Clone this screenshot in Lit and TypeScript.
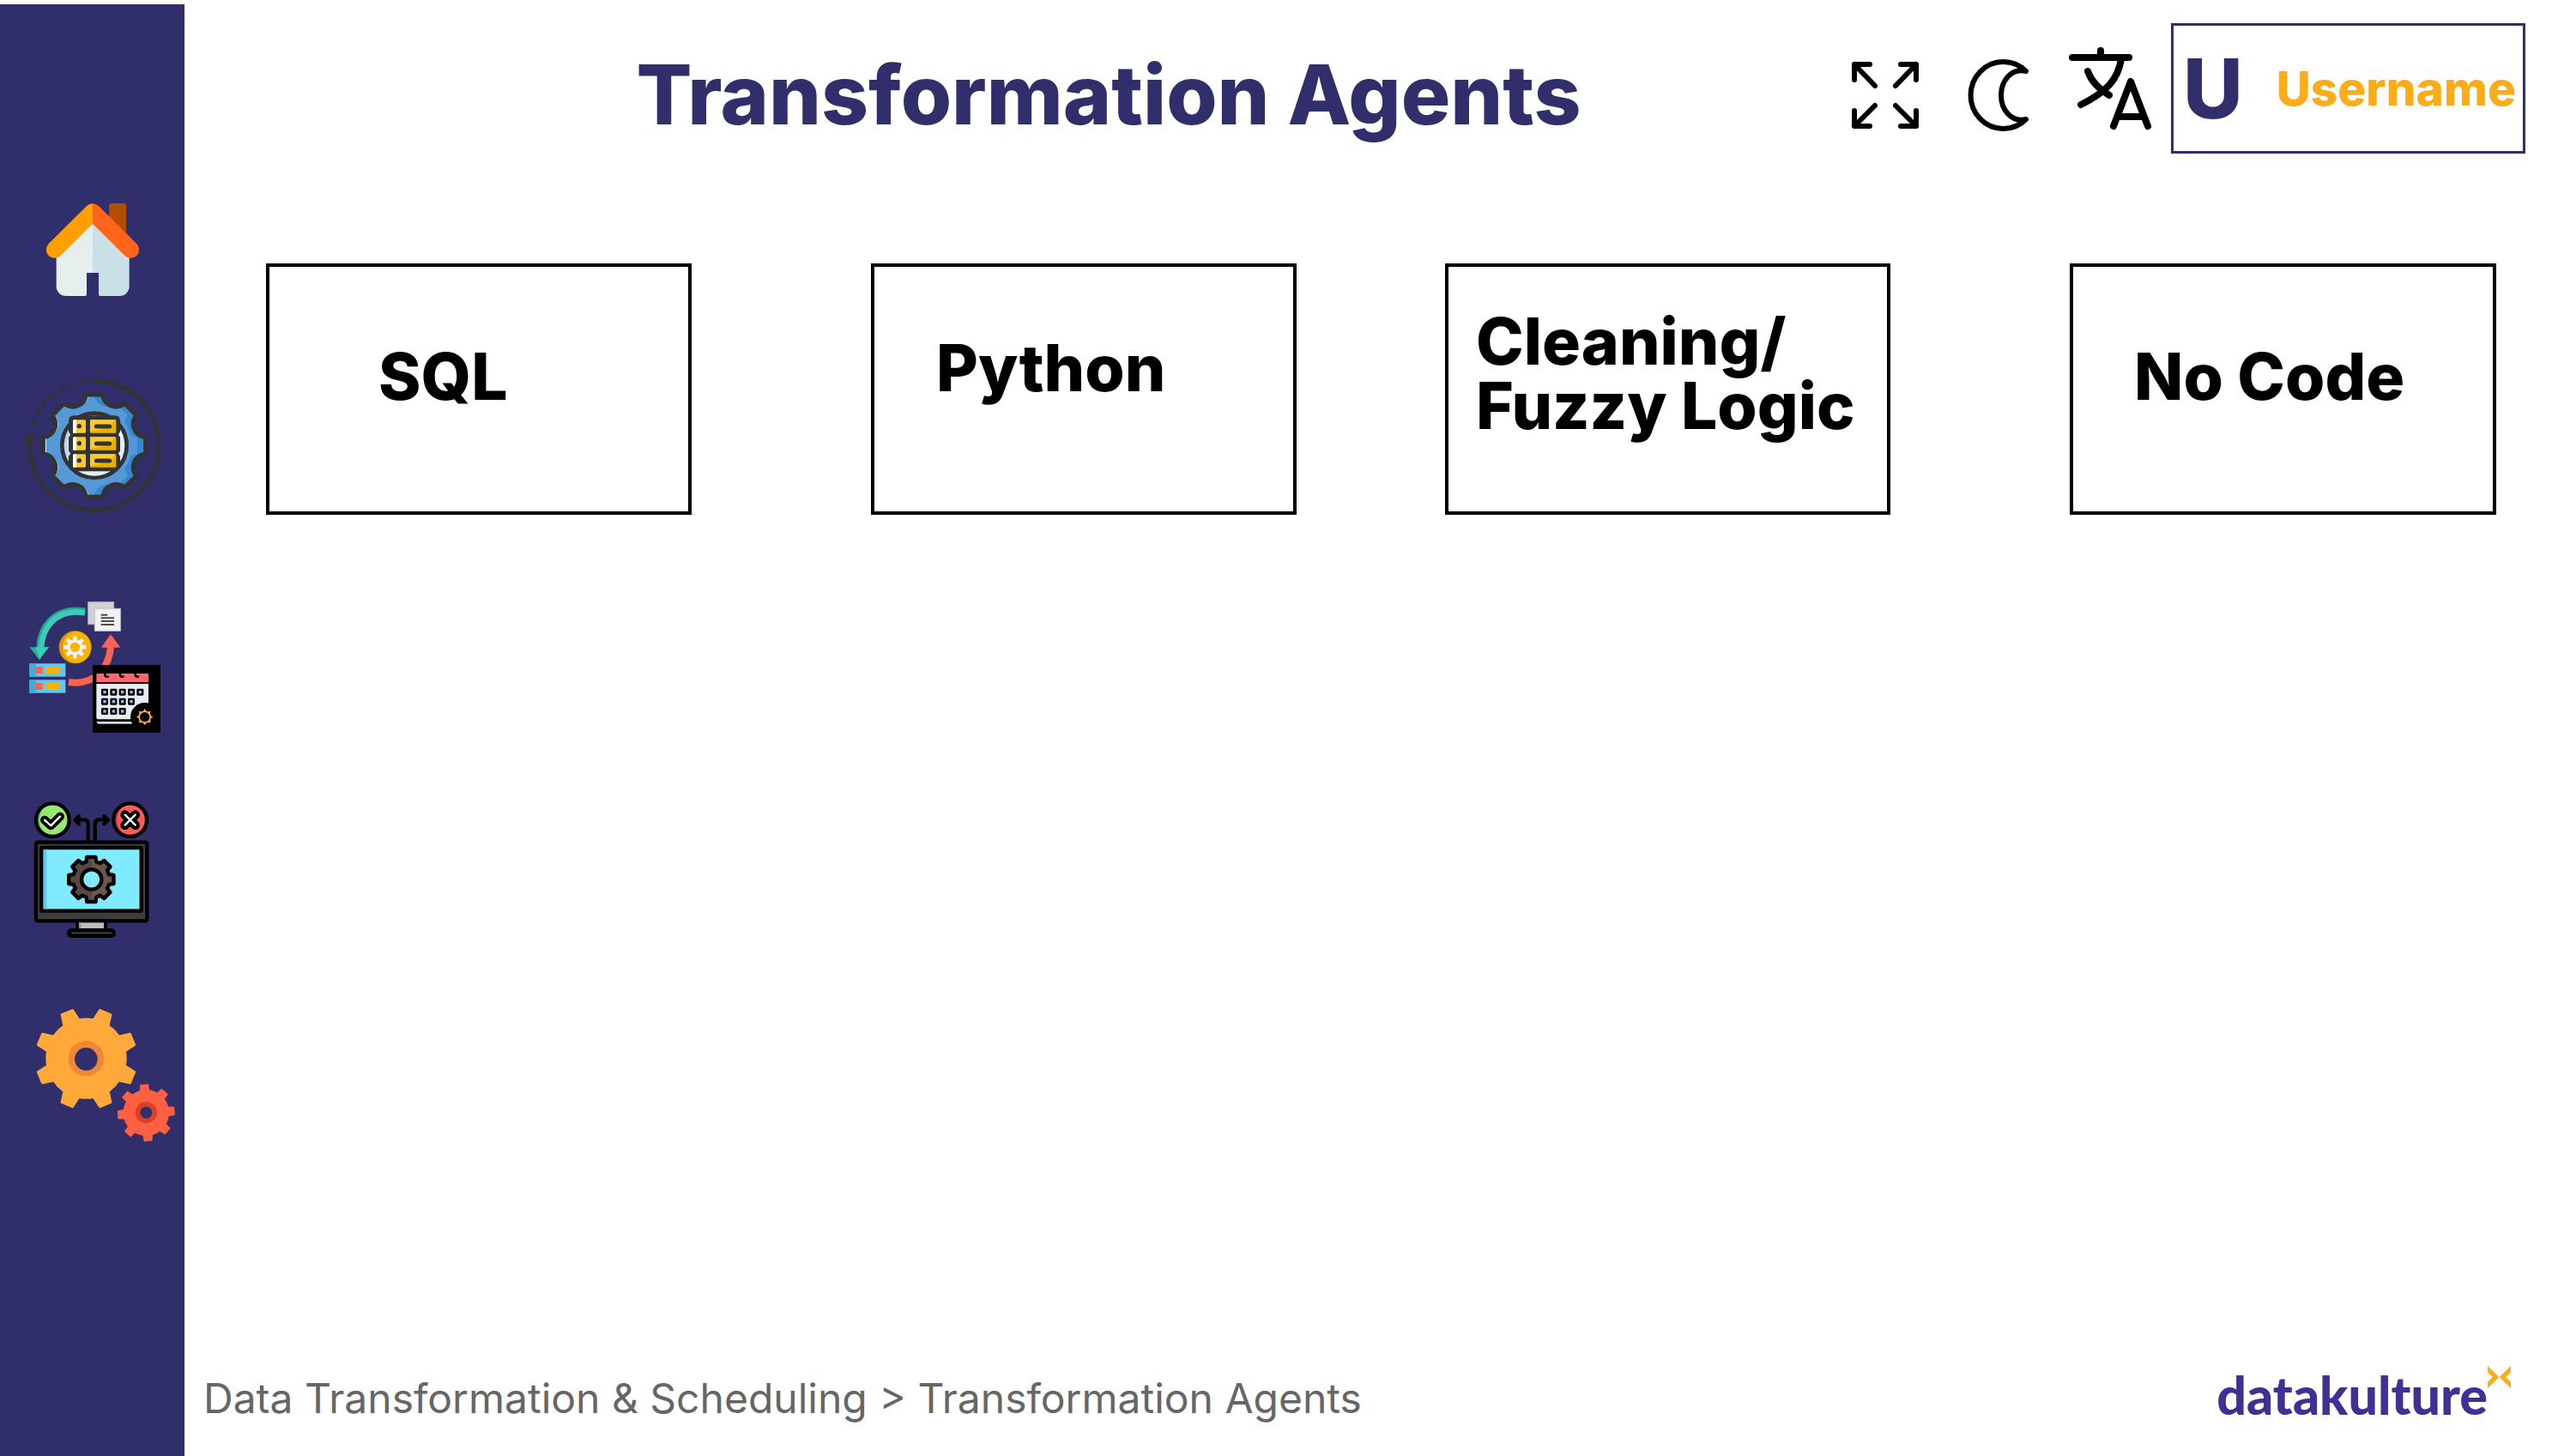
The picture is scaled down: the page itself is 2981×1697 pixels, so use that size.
import { LitElement, html, svg, css } from "lit";
import { customElement } from "lit/decorators.js";

const polar = (cx: number, cy: number, r: number, deg: number): string => {
  const a = ((deg - 90) * Math.PI) / 180;
  return `${(cx + r * Math.cos(a)).toFixed(1)} ${(cy + r * Math.sin(a)).toFixed(1)}`;
};

/** Gear with eight straight teeth; the angles are half widths in degrees. */
const cog = (cx: number, cy: number, body: number, tip: number, base: number, top: number, turn = 0): string => {
  let d = "";
  for (let i = 0; i < 8; i++) {
    const a = turn + i * 45;
    d += `${i ? "L" : "M"}${polar(cx, cy, body, a - base)}L${polar(cx, cy, tip, a - top)}`;
    d += `L${polar(cx, cy, tip, a + top)}L${polar(cx, cy, body, a + base)}`;
    d += `A${body} ${body} 0 0 1 ${polar(cx, cy, body, a + 45 - base)}`;
  }
  return d + "Z";
};

/** Gear whose teeth run into each other in soft hollows. */
const softCog = (cx: number, cy: number): string => {
  let d = `M${polar(cx, cy, 180, -9)}`;
  for (let i = 0; i < 8; i++) {
    const a = i * 45;
    d += `L${polar(cx, cy, 181, a + 9)}C${polar(cx, cy, 144, a + 14)} ${polar(cx, cy, 144, a + 31)} ${polar(cx, cy, 181, a + 36)}`;
  }
  return d + "Z";
};

const homeIcon = svg`
  <rect x="381" y="111" width="60" height="120" rx="8" fill="#b34d00"/>
  <path d="M324 170 197 290V401a34 34 0 0 0 34 34H297q6 0 6-6V354H324Z" fill="#e7efee"/>
  <path d="M324 170 452 290V401a34 34 0 0 1-34 34H351q-6 0-6-6V354H324Z" fill="#c7e1e6"/>
  <clipPath id="roof-l"><rect x="100" y="80" width="224" height="260"/></clipPath>
  <clipPath id="roof-r"><rect x="324" y="80" width="224" height="260"/></clipPath>
  <g fill="none" stroke-width="59" stroke-linecap="round" stroke-linejoin="round">
    <path d="M191 273 324 141 457 273" stroke="#ffa000" clip-path="url(#roof-l)"/>
    <path d="M191 273 324 141 457 273" stroke="#ff641a" clip-path="url(#roof-r)"/>
  </g>`;

const transformIcon = svg`
  <clipPath id="cog"><path d=${softCog(330, 298)}/></clipPath>
  <clipPath id="cog-lit"><path d=${softCog(340, 298)}/></clipPath>
  <g clip-path="url(#cog)">
    <rect x="140" y="100" width="380" height="400" fill="#fff"/>
    <g clip-path="url(#cog-lit)">
      <rect x="140" y="100" width="380" height="400" fill="#3687cc"/>
      <path d=${softCog(300, 298)} fill="#559ad6"/>
      <circle cx="322" cy="298" r="140" fill="#559ad6"/>
    </g>
  </g>
  <path d=${softCog(330, 298)} fill="none" stroke="#333" stroke-width="15" stroke-linejoin="round"/>
  <circle cx="330" cy="298" r="113" fill="#e1edf7"/>
  <path d="M252 216A113 113 0 0 1 408 216L396 208A130 130 0 0 0 264 208Z" fill="#b9d5ef"/>
  <path d="M236 236Q212 298 236 360L246 352Q228 298 246 244Z" fill="#b9d5ef"/>
  <path d="M276 192Q330 178 384 192Z" fill="#b9d5ef"/>
  <circle cx="330" cy="298" r="113" fill="none" stroke="#333" stroke-width="14"/>
  <path d="M240 212q0-19 19-19H400q20 0 20 19V248l-6 12 6 10V316l-6 10 6 10V360L398 388H262L240 360V336l6-10-6-10V270l6-10-6-12Z" fill="#333"/>
  ${[208, 268, 328].map(
    (y) => svg`
    <rect x="255" y=${y} width="45" height="46" rx="4" fill="#ffc928"/>
    <path d=${`M259 ${y}H266V${y + 46}H255V${y + 4}Z`} fill="#fff"/>
    <rect x="315" y=${y} width="91" height="46" rx="3" fill="#e9b200"/>
    <path d=${`M315 ${y}H403Q385 ${y + 34} 315 ${y + 40}Z`} fill="#ffc928"/>
    <circle cx="277" cy=${y + 22} r="8" fill="#333"/>
    <path d=${`M337 ${y + 23}H383`} stroke="#333" stroke-width="15" stroke-linecap="round"/>`
  )}
  <g fill="none" stroke="#333" stroke-width="15" stroke-linecap="round" stroke-linejoin="round">
    <path d="M330 72A226 226 0 1 1 104 298V265"/>
    <path d="M90 276 104 262 118 276" />
    <path d="M292 74 298 73M252 86 258 83M215 104 221 100M182 127 187 122M153 156 157 151M134 184 138 179M117 220 120 214"/>
  </g>`;

const scheduleIcon = svg`
  <path d="M138 226C140 150 190 94 264 94Q282 94 297 97" fill="none" stroke="#1fa793" stroke-width="22"/>
  <path d="M144 226C148 152 196 100 264 100Q282 100 297 103" fill="none" stroke="#3fc9b6" stroke-width="20"/>
  <path d="M104 223H171L138 268Z" fill="#26b19d"/>
  <path d="M124 223H171L138 262Z" fill="#3fc9b6"/>
  <path d="M240 345C310 356 378 318 387 222" fill="none" stroke="#fd6450" stroke-width="24"/>
  <path d="M354 224 387 178 421 224Z" fill="#fd6450"/>
  <rect x="308" y="65" width="90" height="78" fill="#d1d1d1" stroke="#a9a8bd" stroke-width="3"/>
  <rect x="331" y="88" width="90" height="78" fill="#f1f1f1" stroke="#c5c4d4" stroke-width="3"/>
  <path d="M353 110H376M353 121H399M353 132H399M353 144H399" stroke="#4d4d4d" stroke-width="6"/>
  <circle cx="263" cy="223" r="57" fill="#dd9800"/>
  <ellipse cx="268" cy="223" rx="50" ry="55" fill="#fbb302"/>
  <path d=${cog(262, 223, 27, 40, 16, 9)} fill="#f1f1f1"/>
  <circle cx="262" cy="223" r="17" fill="#fbb302"/>
  ${[280, 337].map(
    (y) => svg`
    <rect x="103" y=${y} width="126" height="46" fill="#65c7f1"/>
    <rect x="103" y=${y} width="23" height="46" fill="#4aa9d4"/>
    <rect x="126" y=${y + 11} width="23" height="24" fill="#fd6450"/>
    <rect x="160" y=${y + 11} width="47" height="24" fill="#fbb302"/>`
  )}
  <rect x="324" y="285" width="237" height="237" fill="#000"/>
  <path d="M337 345V319q0-4 4-4H515q4 0 4 4V345Z" fill="#ff6670"/>
  <path d="M367 312V322q2 5 10 4M420 312V322q2 5 10 4M473 312V322q2 5 10 4" fill="none" stroke="#000" stroke-width="8" stroke-linecap="round"/>
  <path d="M337 351H519V475H343q-6 0-6-6Z" fill="#e9edf1"/>
  <path d="M337 483H462V491H345q-6 0-8-8Z" fill="#d2d7dc"/>
  <circle cx="506" cy="467" r="50" fill="#000"/>
  ${[[380, 5], [413, 4], [447, 3]].map(([y, n]) =>
    Array.from({ length: n }, (_, i) => svg`
      <rect x=${354 + i * 31} y=${y - 12} width="24" height="24" rx="4" fill="#000"/>
      <rect x=${361 + i * 31} y=${y - 5} width="10" height="10" fill="#82c2ff"/>`)
  )}
  <path d=${cog(506, 467, 22, 28, 11, 2)} fill="#ffb62d"/>
  <circle cx="506" cy="467" r="17" fill="#000"/>`;

const monitorIcon = svg`
  <g fill="none" stroke="#000" stroke-width="13" stroke-linecap="round" stroke-linejoin="round">
    <path d="M308 214V150q0-14-14-14H262M276 124 262 137 276 151M332 214V150q0-14 14-14H378M364 124 378 137 364 151"/>
  </g>
  <circle cx="184" cy="137" r="58" fill="#97e870"/>
  <path d="M152 88A58 58 0 0 0 152 186Q124 137 152 88Z" fill="#3fbf74"/>
  <circle cx="184" cy="137" r="58" fill="none" stroke="#000" stroke-width="13"/>
  <circle cx="455" cy="137" r="58" fill="#ff5a5a"/>
  <path d="M424 88A58 58 0 0 0 424 186Q398 137 424 88Z" fill="#d83d43"/>
  <circle cx="455" cy="137" r="58" fill="none" stroke="#000" stroke-width="13"/>
  <g fill="none" stroke-linecap="round" stroke-linejoin="round">
    <path d="M156 137 178 157 210 125" stroke="#000" stroke-width="30"/>
    <path d="M156 137 178 157 210 125" stroke="#fff" stroke-width="7"/>
    <path d="M437 119 473 155M473 119 437 155" stroke="#000" stroke-width="32"/>
    <path d="M437 119 473 155M473 119 437 155" stroke="#fff" stroke-width="7"/>
  </g>
  <rect x="126" y="215" width="388" height="275" rx="6" fill="#3d3d3f" stroke="#000" stroke-width="13"/>
  <rect x="145" y="234" width="349" height="221" rx="2" fill="#80eaff" stroke="#000" stroke-width="13"/>
  <rect x="152" y="241" width="11" height="207" fill="#66c3fa"/>
  <rect x="270" y="490" width="99" height="34" fill="#bdbdbd" stroke="#000" stroke-width="12"/>
  <rect x="276" y="496" width="8" height="22" fill="#9a9a9a"/>
  <rect x="234" y="516" width="171" height="33" rx="16" fill="#000"/>
  <path d="M251 532H389" stroke="#48484a" stroke-width="5" stroke-linecap="round"/>
  <clipPath id="cog-dark"><rect x="220" y="240" width="100" height="210"/></clipPath>
  <path d=${cog(319, 345, 64, 80, 16, 11)} fill="#6a5650"/>
  <path d=${cog(319, 345, 64, 80, 16, 11)} fill="#574642" clip-path="url(#cog-dark)"/>
  <path d=${cog(319, 345, 64, 80, 16, 11)} fill="none" stroke="#000" stroke-width="13" stroke-linejoin="round"/>
  <circle cx="320" cy="345" r="35" fill="#80eaff" stroke="#000" stroke-width="13"/>`;

const settingsIcon = svg`
  <path d=${cog(301.5, 251, 137, 175, 11.5, 6.6, 22.5)} fill="#ffa93a" stroke="#ffa93a" stroke-width="9" stroke-linejoin="round"/>
  <circle cx="301" cy="251" r="62" fill="#ee8736"/>
  <circle cx="301" cy="253" r="40" fill="#302f6b"/>
  <path d=${cog(511, 441, 78, 98, 11, 7.4, -4)} fill="#ff6042" stroke="#ff6042" stroke-width="5" stroke-linejoin="round"/>
  <circle cx="511" cy="440" r="38" fill="#d94026"/>
  <circle cx="511" cy="440" r="21" fill="#302f6b"/>`;

const navItems = [
  { label: "Home", box: "0 0 645 600", art: homeIcon },
  { label: "Data transformation", box: "0 60 645 600", art: transformIcon },
  { label: "Scheduling", box: "0 0 645 600", art: scheduleIcon },
  { label: "Monitoring", box: "0 30 645 600", art: monitorIcon },
  { label: "Settings", box: "0 30 645 600", art: settingsIcon },
];

const tools = [
  {
    label: "Full screen",
    art: svg`<path stroke-width="6" d="M12 42V24H30M12 24 36 49M66 24H84V42M84 24 60 49M12 78V96H30M12 96 36 72M66 96H84V78M84 96 60 72"/>`,
  },
  {
    label: "Dark mode",
    art: svg`<path stroke-width="6" d="M81 32A38 39 0 1 0 81 88C63 92 52 76 52 60S63 28 81 32Z"/>`,
  },
  {
    label: "Language",
    art: svg`<path stroke-width="8" d="M4 16H70M37 8V16M61 18C57 42 44 56 14 71M22 32C26 44 34 52 47 60M52 96 72 44 92 96M58 85H86"/>`,
  },
];

const agents = [
  { kind: "sql", name: ["SQL"] },
  { kind: "python", name: ["Python"] },
  { kind: "cleaning", name: ["Cleaning/", "Fuzzy Logic"] },
  { kind: "no-code", name: ["No Code"] },
];

@customElement("app-root")
export class AppRoot extends LitElement {
  static styles = css`
    :host {
      display: flex;
      min-height: 100vh;
      background: #fff;
      color: #000;
      font-family: Inter, "Liberation Sans", sans-serif;
    }
    * {
      box-sizing: border-box;
    }
    svg {
      display: block;
    }
    button {
      padding: 0;
      border: 0;
      background: none;
      color: inherit;
      font: inherit;
      text-align: left;
      cursor: pointer;
    }
    .sidebar {
      flex: none;
      width: 215px;
      margin-top: 5px;
      padding-top: 195px;
      background: #302f6b;
    }
    .nav {
      display: flex;
      flex-direction: column;
      gap: 40px;
    }
    .nav-link svg {
      width: 100%;
      height: 200px;
    }
    .main {
      flex: 1;
      min-width: 0;
      display: flex;
      flex-direction: column;
    }
    .header {
      display: flex;
      align-items: center;
      padding: 27px 38px 0 220px;
    }
    .title {
      flex: 1;
      margin: 0;
      padding-top: 14px;
      color: #302f6b;
      font-size: 96px;
      line-height: 116px;
      font-weight: 800;
      text-align: center;
      white-space: nowrap;
    }
    .tools {
      display: flex;
      gap: 35px;
      margin-right: 23px;
    }
    .tool svg {
      width: 96px;
      height: 104px;
      fill: none;
      stroke: #000;
      stroke-linecap: round;
      stroke-linejoin: round;
    }
    .user {
      display: flex;
      align-items: center;
      justify-content: space-between;
      width: 413px;
      height: 152px;
      padding: 0 8px 0 11px;
      border: 3px solid #302f6b;
    }
    .initial {
      color: #302f6b;
      font-size: 96px;
      font-weight: 800;
    }
    .username {
      color: #fcac18;
      font-size: 55px;
      font-weight: 800;
    }
    .agents {
      display: grid;
      grid-template-columns: 496fr 209fr 496fr 173fr 519fr 209fr 497fr;
      margin-top: 128px;
      padding: 0 72px 0 95px;
    }
    .agent {
      height: 293px;
      padding-bottom: 30px;
      border: 4px solid #000;
      font-size: 75px;
      line-height: 75px;
      font-weight: 800;
      white-space: nowrap;
    }
    .agent span {
      display: block;
    }
    .sql {
      grid-column: 1;
      padding-left: 127px;
    }
    .python {
      grid-column: 3;
      padding-left: 72px;
      padding-bottom: 50px;
    }
    .cleaning {
      grid-column: 5;
      padding-left: 32px;
      padding-bottom: 38px;
    }
    .no-code {
      grid-column: 7;
      padding-left: 71px;
    }
    .footer {
      display: flex;
      align-items: center;
      justify-content: space-between;
      margin-top: auto;
      padding: 0 55px 29px 22px;
    }
    .crumbs {
      color: #666;
      font-size: 48px;
      line-height: 76px;
      white-space: nowrap;
    }
    .crumbs a {
      color: inherit;
      text-decoration: none;
    }
    .brand {
      display: flex;
      align-items: flex-start;
      color: #3d3193;
      text-decoration: none;
    }
    .brand-name {
      padding-top: 2px;
      font-family: Lato, Inter, sans-serif;
      font-size: 61px;
      line-height: 64px;
      font-weight: 900;
    }
    .brand {
      padding-bottom: 10px;
    }
    .brand-mark {
      width: 27px;
      height: 26px;
    }
  `;

  render() {
    return html`
      <aside class="sidebar">
        <nav class="nav">
          ${navItems.map(
            (item) => html`<a class="nav-link" href="#" aria-label=${item.label}
              ><svg viewBox=${item.box} aria-hidden="true">${item.art}</svg></a
            >`
          )}
        </nav>
      </aside>
      <main class="main">
        <header class="header">
          <h1 class="title">Transformation Agents</h1>
          <div class="tools">
            ${tools.map(
              (tool) => html`<button class="tool" type="button" aria-label=${tool.label}>
                <svg viewBox="0 0 96 104" aria-hidden="true">${tool.art}</svg>
              </button>`
            )}
          </div>
          <button class="user" type="button">
            <span class="initial">U</span>
            <span class="username">Username</span>
          </button>
        </header>
        <section class="agents">
          ${agents.map(
            (agent) => html`<button class="agent ${agent.kind}" type="button">
              ${agent.name.map((line) => html`<span>${line}</span>`)}
            </button>`
          )}
        </section>
        <footer class="footer">
          <nav class="crumbs">
            <a href="#">Data Transformation &amp; Scheduling</a> &gt; <a href="#">Transformation Agents</a>
          </nav>
          <a class="brand" href="#">
            <span class="brand-name">datakulture</span>
            <svg class="brand-mark" viewBox="0 0 81 78" aria-hidden="true">
              <path d="M0 0 40 39 0 78V56L17 39 0 22ZM81 0 41 39 81 78V56L64 39 81 22Z" fill="#fcac18" />
            </svg>
          </a>
        </footer>
      </main>
    `;
  }
}
